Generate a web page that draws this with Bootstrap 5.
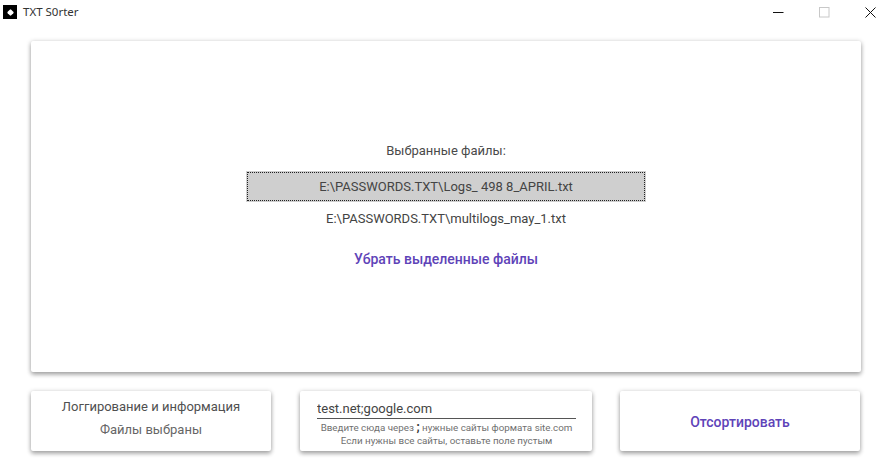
<!DOCTYPE html>
<html lang="ru">
<head>
<meta charset="utf-8">
<title>TXT S0rter</title>
<link href="https://cdn.jsdelivr.net/npm/bootstrap@5.3.0/dist/css/bootstrap.min.css" rel="stylesheet">
<style>
html,body{height:100%;}
body{background:#fff;font-family:Roboto,"Liberation Sans",sans-serif;color:#4a4a4a;overflow:hidden;}
.app-window{width:893px;height:466px;}
.title-bar{height:24px;padding-left:3px;gap:6px;}
.app-logo{width:14px;height:14px;background:#000;}
.app-logo i{width:5px;height:5px;background:#fff;transform:rotate(45deg);border-radius:1px;}
.app-title{font-family:"Noto Sans","Liberation Sans",sans-serif;font-size:11.5px;color:#333;line-height:1;}
.win-btn{width:46px;height:24px;}
.work-area{padding:17px 32px 0 31px;}
.paper{background:#fff;border-radius:2px;box-shadow:0 1px 5px rgba(0,0,0,.28),0 3px 4px rgba(0,0,0,.2);}
.main-paper{height:331px;padding-top:101px;}
.files-head{font-size:13px;line-height:18px;margin-bottom:11px;}
.file-item{width:400px;height:30px;font-size:13px;line-height:30px;color:#444;margin-bottom:2px;}
.file-item.picked{height:31px;line-height:32px;background:#cfcfcf;outline:1px dotted #222;outline-offset:-2px;}
.action-link{font-size:14px;font-weight:500;color:#5e43b8;line-height:18px;background:none;border:0;padding:0;}
.remove-link{margin-top:14px;}
.bottom-row{margin-top:19px;height:60px;}
.log-paper{width:240px;padding-bottom:5px;}
.log-title{font-size:13px;line-height:18px;margin-bottom:5px;color:#505050;}
.log-status{font-size:13px;line-height:18px;color:#666;}
.input-paper{width:292px;margin-left:29px;padding:7px 16px 0 17px;}
.sites-input{border:0;border-bottom:1px solid #555;border-radius:0;padding:0;height:21px;font-size:13px;line-height:18px;color:#444;background:transparent;box-shadow:none;}
.sites-input:focus{border-color:#555;box-shadow:none;color:#444;}
.hint-text{font-size:9.8px;line-height:13px;color:#707070;margin-top:2px;white-space:nowrap;}
.hint-sep{font-weight:700;font-size:12px;color:#333;line-height:10px;}
.sort-paper{width:240px;margin-left:28px;padding-top:2px;}
</style>
</head>
<body>
<div class="app-window d-flex flex-column">
  <div class="title-bar d-flex align-items-center">
    <div class="app-logo d-flex align-items-center justify-content-center"><i class="d-block"></i></div>
    <div class="app-title flex-grow-1">TXT S0rter</div>
    <div class="d-flex">
      <div class="win-btn d-flex align-items-center justify-content-center">
        <svg width="11" height="11" viewBox="0 0 11 11"><path d="M0 5.5H10.500" stroke="#111" stroke-width="1" fill="none"/></svg>
      </div>
      <div class="win-btn d-flex align-items-center justify-content-center">
        <svg width="11" height="11" viewBox="0 0 11 11"><rect x=".5" y=".5" width="9.500" height="9.500" stroke="#c8c8c8" fill="none"/></svg>
      </div>
      <div class="win-btn d-flex align-items-center justify-content-center">
        <svg width="11" height="11" viewBox="0 0 11 11"><path d="M.5 .5L10.500 10.500M10.500 .5L.5 10.500" stroke="#111" stroke-width="1" fill="none"/></svg>
      </div>
    </div>
  </div>
  <div class="work-area">
    <div class="paper main-paper d-flex flex-column align-items-center text-center">
      <div class="files-head">Выбранные файлы:</div>
      <div class="file-item picked">E:\PASSWORDS.TXT\Logs_ 498 8_APRIL.txt</div>
      <div class="file-item">E:\PASSWORDS.TXT\multilogs_may_1.txt</div>
      <button type="button" class="action-link remove-link">Убрать выделенные файлы</button>
    </div>
    <div class="bottom-row d-flex">
      <div class="paper log-paper d-flex flex-column align-items-center justify-content-center text-center">
        <div class="log-title">Логгирование и информация</div>
        <div class="log-status">Файлы выбраны</div>
      </div>
      <div class="paper input-paper text-center">
        <input type="text" class="form-control sites-input" value="test.net;google.com">
        <div class="hint-text">Введите сюда через <span class="hint-sep">;</span> нужные сайты формата site.com<br>Если нужны все сайты, оставьте поле пустым</div>
      </div>
      <div class="paper sort-paper d-flex align-items-center justify-content-center">
        <button type="button" class="action-link">Отсортировать</button>
      </div>
    </div>
  </div>
</div>
</body>
</html>
